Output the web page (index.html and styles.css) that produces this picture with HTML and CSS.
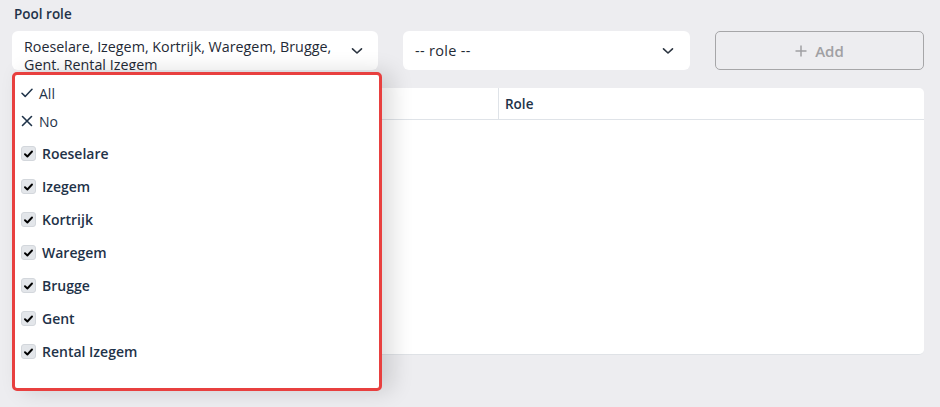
FILE: index.html
```html
<!DOCTYPE html>
<html>
<head>
<meta charset="utf-8">
<link rel="stylesheet" href="styles.css">
</head>
<body>
<div class="page">
  <div class="field-label">Pool role</div>
  <div class="controls">
    <div class="select-wrap">
      <div class="select multi">
        <span class="select-text">Roeselare, Izegem, Kortrijk, Waregem, Brugge, Gent, Rental Izegem</span>
        <svg class="chev" width="12" height="8" viewBox="0 0 12 8"><path d="M1.5 1.8 L6 6 L10.5 1.8" fill="none" stroke="#2b3440" stroke-width="1.6" stroke-linecap="round" stroke-linejoin="round"/></svg>
      </div>
      <div class="dropdown">
        <div class="opt action">
          <svg class="mark" width="12" height="10" viewBox="0 0 12 10"><path d="M1 5.2 L4.2 8.4 L11 1.2" fill="none" stroke="#1f3349" stroke-width="1.5" stroke-linecap="round" stroke-linejoin="round"/></svg>
          <span>All</span>
        </div>
        <div class="opt action">
          <svg class="mark" width="12" height="12" viewBox="0 0 12 12"><path d="M1.5 1.5 L10.5 10.5 M10.5 1.5 L1.5 10.5" fill="none" stroke="#1f3349" stroke-width="1.6" stroke-linecap="round"/></svg>
          <span>No</span>
        </div>
        <div class="opt item"><span class="cb"><svg width="9" height="8" viewBox="0 0 9 8"><path d="M1 4.2 L3.4 6.5 L8 1.5" fill="none" stroke="#000" stroke-width="1.9" stroke-linecap="round" stroke-linejoin="round"/></svg></span><span>Roeselare</span></div>
        <div class="opt item"><span class="cb"><svg width="9" height="8" viewBox="0 0 9 8"><path d="M1 4.2 L3.4 6.5 L8 1.5" fill="none" stroke="#000" stroke-width="1.9" stroke-linecap="round" stroke-linejoin="round"/></svg></span><span>Izegem</span></div>
        <div class="opt item"><span class="cb"><svg width="9" height="8" viewBox="0 0 9 8"><path d="M1 4.2 L3.4 6.5 L8 1.5" fill="none" stroke="#000" stroke-width="1.9" stroke-linecap="round" stroke-linejoin="round"/></svg></span><span>Kortrijk</span></div>
        <div class="opt item"><span class="cb"><svg width="9" height="8" viewBox="0 0 9 8"><path d="M1 4.2 L3.4 6.5 L8 1.5" fill="none" stroke="#000" stroke-width="1.9" stroke-linecap="round" stroke-linejoin="round"/></svg></span><span>Waregem</span></div>
        <div class="opt item"><span class="cb"><svg width="9" height="8" viewBox="0 0 9 8"><path d="M1 4.2 L3.4 6.5 L8 1.5" fill="none" stroke="#000" stroke-width="1.9" stroke-linecap="round" stroke-linejoin="round"/></svg></span><span>Brugge</span></div>
        <div class="opt item"><span class="cb"><svg width="9" height="8" viewBox="0 0 9 8"><path d="M1 4.2 L3.4 6.5 L8 1.5" fill="none" stroke="#000" stroke-width="1.9" stroke-linecap="round" stroke-linejoin="round"/></svg></span><span>Gent</span></div>
        <div class="opt item"><span class="cb"><svg width="9" height="8" viewBox="0 0 9 8"><path d="M1 4.2 L3.4 6.5 L8 1.5" fill="none" stroke="#000" stroke-width="1.9" stroke-linecap="round" stroke-linejoin="round"/></svg></span><span>Rental Izegem</span></div>
      </div>
    </div>
    <div class="select single">
      <span class="select-text">-- role --</span>
      <svg class="chev" width="12" height="8" viewBox="0 0 12 8"><path d="M1.5 1.8 L6 6 L10.5 1.8" fill="none" stroke="#2b3440" stroke-width="1.6" stroke-linecap="round" stroke-linejoin="round"/></svg>
    </div>
    <button class="add-btn"><svg class="plus" width="12" height="12" viewBox="0 0 12 12"><path d="M6 0.5 V11.5 M0.5 6 H11.5" fill="none" stroke="#a0a0a3" stroke-width="1.5"/></svg><span>Add</span></button>
  </div>
  <div class="table-card">
    <div class="thead">
      <div class="th first"></div>
      <div class="th">Role</div>
    </div>
    <div class="tbody"></div>
  </div>
</div>
</body>
</html>
```
FILE: styles.css
```css
* { box-sizing: border-box; }
html, body { margin: 0; padding: 0; }
body {
  background: #ededf0;
  font-family: "Open Sans", "Noto Sans", sans-serif;
  color: #1f3349;
  width: 940px;
  height: 407px;
  overflow: hidden;
}
.page {
  padding: 5px 16px 0 12px;
}
.field-label {
  font-size: 13.5px;
  font-weight: 600;
  color: #1f3349;
  padding-left: 2px;
  height: 26px;
  line-height: 18px;
}
.controls {
  display: flex;
  gap: 25px;
  align-items: flex-start;
}
.select-wrap {
  position: relative;
  width: 366px;
}
.select {
  background: #fff;
  border-radius: 6px;
  height: 39px;
  display: flex;
  align-items: flex-start;
  position: relative;
}
.select.multi {
  overflow: hidden;
  padding: 7px 30px 0 12px;
}
.select.multi .select-text {
  font-size: 14.3px;
  line-height: 18px;
  color: #1f2a36;
}
.select.single {
  width: 287px;
  align-items: center;
  padding: 0 12px;
}
.select.single .select-text {
  font-size: 14.5px;
  letter-spacing: 0.3px;
  color: #1f2a36;
}
.chev {
  position: absolute;
  right: 15px;
  top: 16px;
}
.select.single .chev { right: 16px; top: 16px; }
.add-btn {
  width: 209px;
  height: 39px;
  background: #ededf0;
  border: 1px solid #a6a6a8;
  border-radius: 5px;
  font-family: "Open Sans", "Noto Sans", sans-serif;
  font-size: 15px;
  font-weight: 600;
  color: #a0a0a3;
  display: flex;
  align-items: center;
  justify-content: center;
  gap: 8px;
  padding: 0;
}
.plus { flex: 0 0 12px; }
.dropdown {
  position: absolute;
  top: 41px;
  left: 0;
  width: 370px;
  height: 319px;
  background: #fff;
  border: 3px solid #e8403f;
  border-radius: 5px;
  box-shadow: 10px 0 22px rgba(0,0,0,0.14);
  z-index: 5;
  padding: 4px 0 0 6px;
}
.opt {
  display: flex;
  align-items: center;
  font-size: 14px;
  color: #1f3349;
}
.opt.action {
  height: 28px;
  gap: 6px;
  font-weight: 500;
}
.opt.action .mark { flex: 0 0 12px; }
.opt.item {
  height: 33px;
  gap: 6px;
  font-weight: 600;
}
.opt.action + .opt.item { margin-top: 2px; }
.cb {
  width: 15px;
  height: 15px;
  background: #e3e6ea;
  border: 1px solid #d3d7dc;
  border-radius: 3px;
  display: flex;
  align-items: center;
  justify-content: center;
}
.table-card {
  margin-top: 18px;
  background: #fff;
  border-radius: 5px;
  height: 267px;
  border-bottom: 1px solid #dfe2e6;
}
.thead {
  display: flex;
  height: 32px;
  border-bottom: 1px solid #dfe3e8;
}
.th {
  font-size: 13.5px;
  font-weight: 600;
  display: flex;
  align-items: center;
  padding-left: 6px;
  color: #1f3349;
}
.th.first {
  width: 487px;
  border-right: 1px solid #dfe3e8;
}
```
